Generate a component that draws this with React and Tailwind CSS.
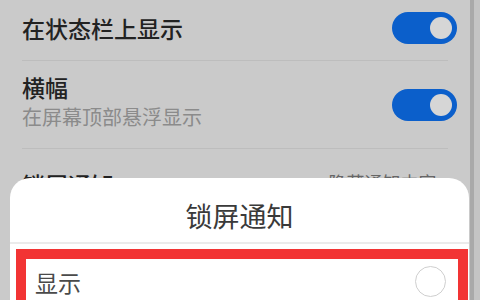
import React from "react";

const font = { fontFamily: '"Noto Sans CJK SC", "Noto Sans", sans-serif' };

function Toggle() {
  return (
    <div className="w-[65px] h-[32px] rounded-full bg-[#0b5fcb] flex items-center justify-end pr-[5px] shrink-0">
      <div className="w-[22px] h-[22px] rounded-full bg-[#d6d6d6]" />
    </div>
  );
}

export default function App() {
  return (
    <div className="relative w-[480px] h-[300px] overflow-hidden bg-[#cacaca] flex" style={font}>
      <div className="w-[470px] flex flex-col">
        <div className="h-[60px] flex items-center justify-between pl-[22px] pr-[13px] pb-[4px]">
          <span className="text-[23px] leading-none font-medium text-[#222]">在状态栏上显示</span>
          <Toggle />
        </div>
        <div className="mx-[22px] h-px bg-[#bdbdbd]" />
        <div className="h-[87px] flex items-center justify-between pl-[22px] pr-[13px]">
          <div className="flex flex-col gap-[8px] -mt-[6px]">
            <span className="text-[23px] leading-none font-medium text-[#222]">横幅</span>
            <span className="text-[20px] leading-none text-[#8b8b8b]">在屏幕顶部悬浮显示</span>
          </div>
          <Toggle />
        </div>
        <div className="mx-[22px] h-px bg-[#bdbdbd]" />
        <div className="flex justify-between pl-[22px] pr-[24px] pt-[24px]">
          <span className="text-[23px] leading-none font-medium text-[#222]">锁屏通知</span>
          <span className="text-[18px] leading-none text-[#666]">隐藏通知内容 ›</span>
        </div>
      </div>
      <div className="w-[4px] bg-[#a9a9a9]" />
      <div className="flex-1 bg-[#c4c4c4]" />

      <div className="absolute left-[10px] top-[178px] w-[459px] h-[140px] bg-white rounded-t-[20px] flex flex-col">
        <div className="h-[73px] flex justify-center pt-[24px]">
          <span className="text-[27px] leading-none text-[#3a3a3a]">锁屏通知</span>
        </div>
        <div className="h-[3px] bg-[#ebebeb]" />
        <div className="mt-[5px] ml-[6px] w-[452px] h-[80px] border-[10px] border-[#f23434] flex items-start justify-between pl-[9px] pr-[12px]">
          <span className="mt-[12px] text-[23px] leading-none text-[#4a4a4a]">显示</span>
          <div className="mt-[7px] w-[31px] h-[31px] rounded-full border border-[#cfcfcf]" />
        </div>
      </div>
    </div>
  );
}
